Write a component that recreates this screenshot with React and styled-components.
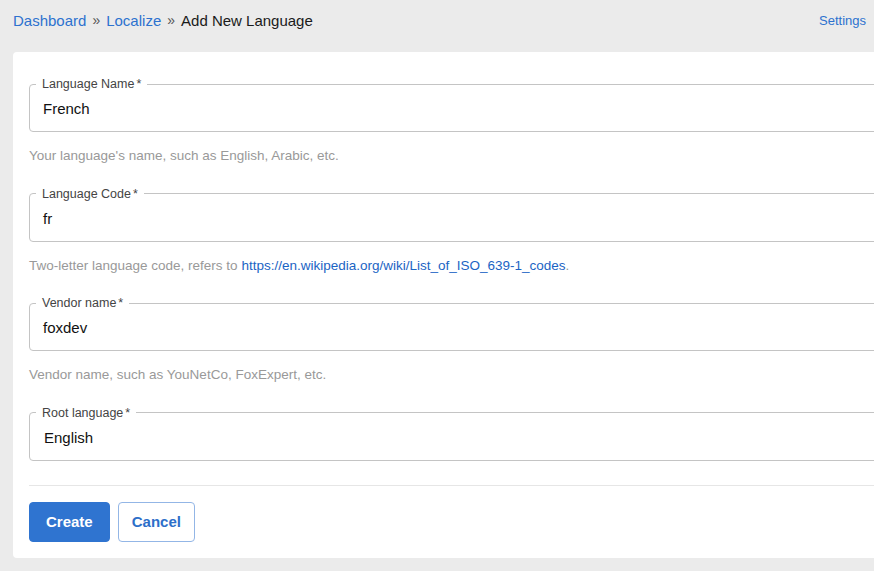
import React from "react";
import styled, { createGlobalStyle } from "styled-components";

const GlobalStyle = createGlobalStyle`
  html, body {
    margin: 0;
    padding: 0;
    background: #ebebeb;
    overflow: hidden;
  }
  body {
    font-family: "Liberation Sans", Arial, sans-serif;
    color: #1a1a1a;
  }
`;

const Page = styled.div`
  width: 874px;
  height: 571px;
  padding: 0 8px 0 13px;
  box-sizing: border-box;
`;

const Header = styled.div`
  display: flex;
  align-items: center;
  justify-content: space-between;
  height: 40px;
`;

const Crumbs = styled.div`
  display: flex;
  align-items: center;
  gap: 6px;
  font-size: 15px;
`;

const Link = styled.a`
  color: ${({ $dark }) => ($dark ? "#1b64c4" : "#2d72cf")};
  text-decoration: none;
  cursor: pointer;
`;

const Sep = styled.span`
  color: #555;
  font-size: 14px;
`;

const Current = styled.span`
  color: #1a1a1a;
`;

const SettingsLink = styled(Link)`
  font-size: 13px;
`;

const Card = styled.div`
  margin-top: 12px;
  margin-right: -60px;
  background: #fff;
  border-radius: 4px;
  padding: 25px 0 16px 16px;
`;

const Fields = styled.div`
  display: flex;
  flex-direction: column;
  gap: 22.5px;
`;

const Field = styled.fieldset`
  margin: 0;
  padding: 0 0 3px 0;
  border: 1px solid #c4c4c4;
  border-radius: 4px;
`;

const Legend = styled.legend`
  margin-left: 6px;
  padding: 0 6px;
  font-size: 12.5px;
  line-height: 14px;
  color: #444;
`;

const Star = styled.span`
  margin-left: 2px;
`;

const Value = styled.div`
  height: 37px;
  display: flex;
  align-items: center;
  padding-bottom: 2px;
  box-sizing: border-box;
  padding-left: ${({ $select }) => ($select ? "14px" : "13px")};
  font-size: 15px;
  color: #111;
`;

const Help = styled.p`
  margin: 16px 0 0;
  font-size: 13.5px;
  line-height: 16px;
  color: #999;
`;

const Divider = styled.hr`
  border: none;
  border-top: 1px solid #e6e6e6;
  margin: 24px 0 16px;
`;

const Actions = styled.div`
  display: flex;
  gap: 8px;
`;

const Button = styled.button`
  height: 40px;
  padding: 0 ${({ $primary }) => ($primary ? "16px" : "13px")};
  border-radius: 4px;
  font-family: inherit;
  font-size: 15px;
  font-weight: bold;
  cursor: pointer;
  background: ${({ $primary }) => ($primary ? "#2f74d0" : "#fff")};
  color: ${({ $primary }) => ($primary ? "#fff" : "#2d6fc9")};
  border: 1px solid ${({ $primary }) => ($primary ? "#2f74d0" : "#93b6e6")};
`;

const fields = [
  {
    label: "Language Name",
    value: "French",
    help: "Your language's name, such as English, Arabic, etc.",
  },
  {
    label: "Language Code",
    value: "fr",
    help: (
      <>
        Two-letter language code, refers to{" "}
        <Link $dark>https://en.wikipedia.org/wiki/List_of_ISO_639-1_codes</Link>.
      </>
    ),
  },
  {
    label: "Vendor name",
    value: "foxdev",
    help: "Vendor name, such as YouNetCo, FoxExpert, etc.",
  },
  { label: "Root language", value: "English", select: true },
];

const App = () => (
  <>
    <GlobalStyle />
    <Page>
      <Header>
        <Crumbs>
          <Link>Dashboard</Link>
          <Sep>»</Sep>
          <Link>Localize</Link>
          <Sep>»</Sep>
          <Current>Add New Language</Current>
        </Crumbs>
        <SettingsLink>Settings</SettingsLink>
      </Header>
      <Card>
        <Fields>
          {fields.map(({ label, value, help, select }) => (
            <div key={label}>
              <Field>
                <Legend>
                  {label}
                  <Star>*</Star>
                </Legend>
                <Value $select={select}>{value}</Value>
              </Field>
              {help && <Help>{help}</Help>}
            </div>
          ))}
        </Fields>
        <Divider />
        <Actions>
          <Button $primary>Create</Button>
          <Button>Cancel</Button>
        </Actions>
      </Card>
    </Page>
  </>
);

export default App;
